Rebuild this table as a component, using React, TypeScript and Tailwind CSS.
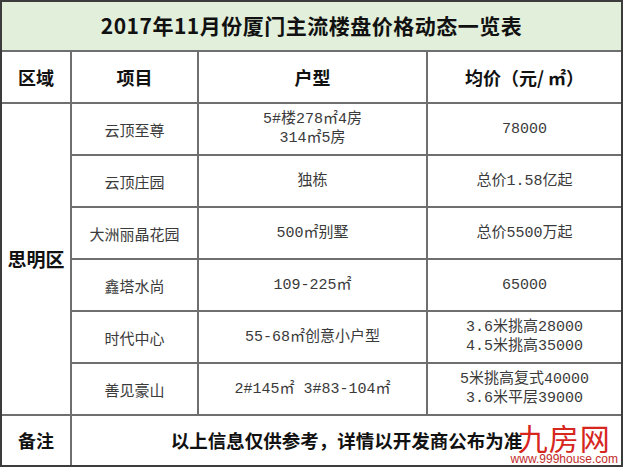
type Row = {
  name: string;
  layout: string[];
  price: string[];
};

const rows: Row[] = [
  { name: "云顶至尊", layout: ["5#楼278㎡4房", "314㎡5房"], price: ["78000"] },
  { name: "云顶庄园", layout: ["独栋"], price: ["总价1.58亿起"] },
  { name: "大洲丽晶花园", layout: ["500㎡别墅"], price: ["总价5500万起"] },
  { name: "鑫塔水尚", layout: ["109-225㎡"], price: ["65000"] },
  { name: "时代中心", layout: ["55-68㎡创意小户型"], price: ["3.6米挑高28000", "4.5米挑高35000"] },
  { name: "善见豪山", layout: ["2#145㎡ 3#83-104㎡"], price: ["5米挑高复式40000", "3.6米平层39000"] },
];

const cell = "bg-white flex flex-col items-center justify-center text-center";
const dataText =
  "font-['Liberation_Mono','Noto_Sans_CJK_SC',monospace] text-[15px] leading-[19px] text-[#3a3a3a]";
const headText = "font-['Noto_Sans_CJK_SC',sans-serif] font-bold text-[18px] text-[#111]";

function App() {
  return (
    <div className="w-[625px] h-[471px] bg-white">
      <div className="relative w-[623px] border-2 border-[#3c3c3c]">
        <div className="grid grid-cols-[68px_125px_227px_193px] grid-rows-[48px_50px_repeat(6,50px)_49px] gap-[2px] bg-[#6f6f6f]">
          {/* Title */}
          <div className="col-span-4 bg-[#e2efda] flex items-center justify-center">
            <span className="font-['Noto_Sans_CJK_SC',sans-serif] font-bold text-[21px] tracking-[0.5px] text-[#111]">
              2017年11月份厦门主流楼盘价格动态一览表
            </span>
          </div>

          {/* Header */}
          <div className={cell}>
            <span className={headText}>区域</span>
          </div>
          <div className={cell}>
            <span className={headText}>项目</span>
          </div>
          <div className={cell}>
            <span className={headText}>户型</span>
          </div>
          <div className={cell}>
            <span className={headText}>均价（元/ ㎡）</span>
          </div>

          {/* District */}
          <div className={`${cell} row-span-6`}>
            <span className={`${headText} text-[19px]`}>思明区</span>
          </div>

          {rows.map((r) => (
            <div key={r.name} className="contents">
              <div className={cell}>
                <span className={`${dataText} font-['Noto_Sans_CJK_SC',sans-serif]`}>{r.name}</span>
              </div>
              <div className={cell}>
                {r.layout.map((l) => (
                  <span key={l} className={dataText}>
                    {l}
                  </span>
                ))}
              </div>
              <div className={cell}>
                {r.price.map((p) => (
                  <span key={p} className={dataText}>
                    {p}
                  </span>
                ))}
              </div>
            </div>
          ))}

          {/* Notes */}
          <div className={cell}>
            <span className={headText}>备注</span>
          </div>
          <div className={`${cell} col-span-3`}>
            <span className="font-['Noto_Sans_CJK_SC',sans-serif] font-bold text-[18.5px] text-[#111]">
              以上信息仅供参考，详情以开发商公布为准
            </span>
          </div>
        </div>

        {/* Watermark logo */}
        <div className="absolute right-[3px] bottom-0 flex flex-col items-center gap-[3px]">
          <span className="font-['Noto_Sans_CJK_SC',sans-serif] font-normal text-[30px] leading-[26px] text-[#d6261e] tracking-[1px]">
            九房网
          </span>
          <span className="font-['Liberation_Sans',sans-serif] text-[12px] leading-[12px] text-[#c22a2a] bg-white">
            www.999house.com
          </span>
        </div>
      </div>
    </div>
  );
}

export default App;
